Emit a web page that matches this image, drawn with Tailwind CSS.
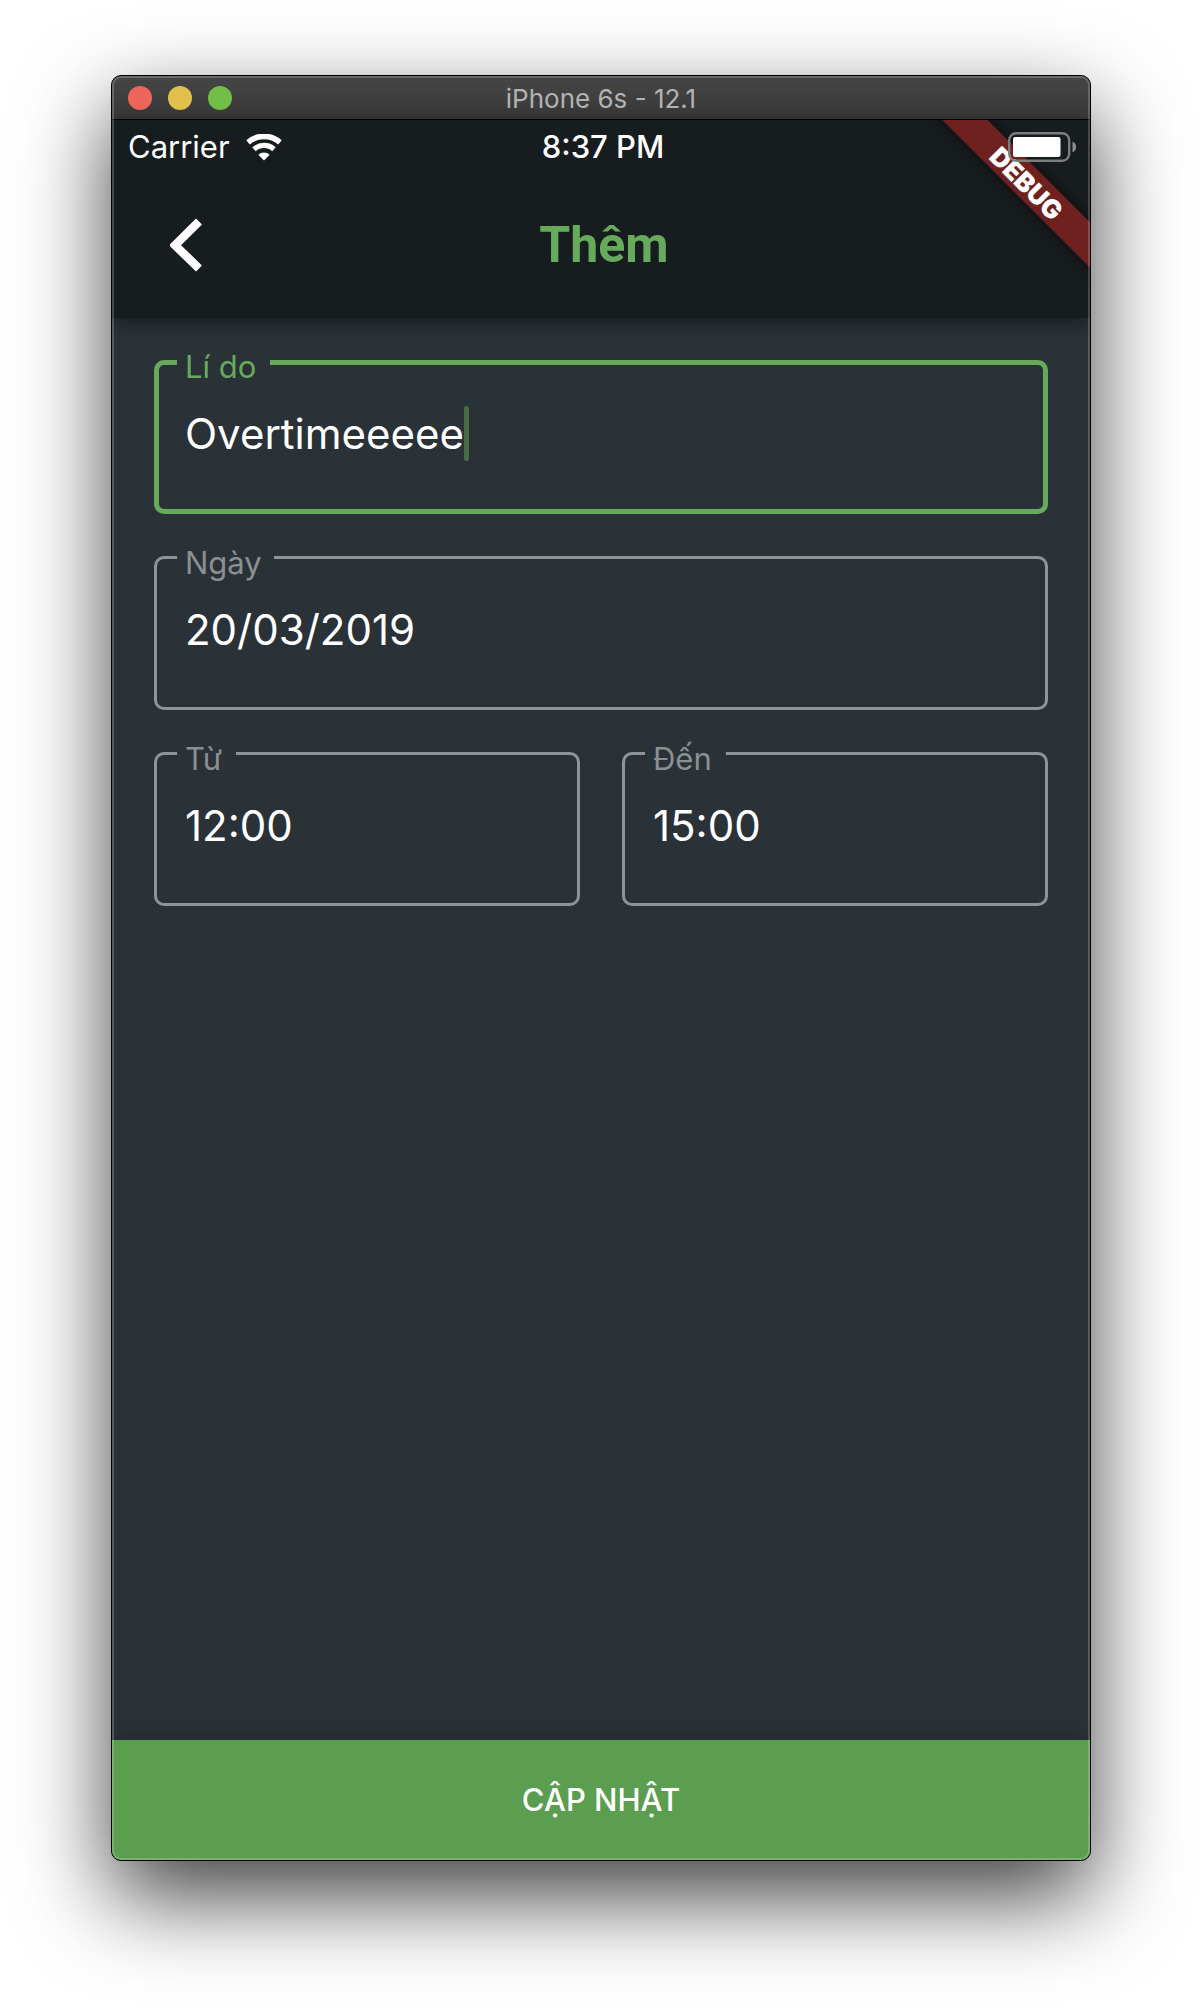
<!DOCTYPE html>
<html lang="vi">
<head>
<meta charset="utf-8">
<meta name="viewport" content="width=device-width, initial-scale=1">
<title>Thêm</title>
<script src="https://cdn.jsdelivr.net/npm/@tailwindcss/browser@4"></script>
</head>
<body class="bg-white font-['Inter','Noto_Sans',sans-serif]">
<div class="flex min-h-screen flex-col px-[111px] pt-[75px] pb-[147px]">
  <div class="relative flex grow flex-col overflow-hidden rounded-[10px] border border-black bg-[#2a3137] shadow-[0_36px_90px_rgba(0,0,0,0.75)]">

    <!-- Window title bar -->
    <div class="grid h-11 grid-cols-[1fr_auto_1fr] items-center border-b border-black bg-linear-to-b from-[#464646] to-[#383838] px-4">
      <div class="flex gap-4">
        <button type="button" aria-label="Close" class="size-6 rounded-full bg-[#ee655b]"></button>
        <button type="button" aria-label="Minimise" class="size-6 rounded-full bg-[#e1c04c]"></button>
        <button type="button" aria-label="Zoom" class="size-6 rounded-full bg-[#72be47]"></button>
      </div>
      <p class="pt-0.5 text-[26px] leading-8 text-[#b3b3b3]">iPhone 6s - 12.1</p>
    </div>

    <header class="relative h-[198px] bg-[#171c1e] shadow-[0_4px_16px_rgba(0,0,0,0.4)]">
      <!-- Debug ribbon across the corner -->
      <div class="absolute top-0 right-0 size-[180px] overflow-hidden">
        <div class="absolute top-[45px] -right-[66px] flex h-8 w-[260px] rotate-45 items-center justify-center bg-[#6f211f] pt-1 pl-1 text-[26px] leading-8 font-black text-white shadow-[0_0_16px_rgba(0,0,0,0.5)]">DEBUG</div>
      </div>
      <!-- Status bar -->
      <div class="relative grid h-[54px] grid-cols-[1fr_auto_1fr] items-center pr-3 pl-4 text-[31px] leading-9 text-white">
        <div class="flex items-center gap-4">
          <span>Carrier</span>
          <svg class="h-[27px] w-9" viewBox="0 0 36 27" fill="none" aria-label="Wi-Fi">
            <path d="M2 8.300A24.500 24.500 0 0 1 34 8.300" stroke="#fff" stroke-width="5.600"/>
            <path d="M8 15.200A15 15 0 0 1 28 15.200" stroke="#fff" stroke-width="5.200"/>
            <path d="M18 26.500 12.300 20.700A8.500 8.500 0 0 1 23.700 20.700Z" fill="#fff"/>
          </svg>
        </div>
        <span class="font-medium">8:37 PM</span>
        <svg class="h-[30px] w-[70px] justify-self-end" viewBox="0 0 70 30" fill="none" aria-label="Battery">
          <rect x="1.200" y="1.200" width="60" height="27.600" rx="7" stroke="#7b7d7e" stroke-width="2.400"/>
          <rect x="5" y="5" width="47.500" height="20" rx="2" fill="#fff"/>
          <path d="M64.500 9.500A6 6 0 0 1 64.500 20.500Z" fill="#8b8d8e"/>
        </svg>
      </div>
      <!-- App bar -->
      <div class="relative grid h-[144px] grid-cols-[1fr_auto_1fr] items-center pr-9 pb-0.5 pl-[42px]">
        <button type="button" aria-label="Back" class="flex h-16 w-16 items-center justify-center">
          <svg class="h-[54px] w-8" viewBox="0 0 32 54" fill="none"><path d="M29 3.500 5 27.200 29 50.500" stroke="#fff" stroke-width="8.500"/></svg>
        </button>
        <h1 class="font-['Roboto','Noto_Sans',sans-serif] text-[50px] leading-16 font-bold text-[#66ab5b]">Thêm</h1>
      </div>
    </header>

    <form class="flex grow flex-col">
      <div class="grid grow grid-cols-2 content-start gap-[42px] p-[42px]">
        <div class="relative col-span-2 flex h-[154px] rounded-[10px] border-[5px] border-[#66ab5b] px-[26px] pt-[41px]">
          <label for="reason" class="absolute -top-[18px] left-[18px] bg-[#2a3137] pr-3.5 pl-2 text-[31px] leading-10 text-[#66ab5b]">Lí do</label>
          <input id="reason" type="text" value="Overtimeeeee" class="field-sizing-content h-[56px] text-[42px] leading-[56px] text-white outline-none">
          <span class="h-[55px] w-[5px] rounded-full bg-[#476c48]"></span>
        </div>
        <div class="relative col-span-2 flex h-[154px] rounded-[10px] border-[3px] border-[#8e9497] px-7 pt-[43px]">
          <label for="date" class="absolute -top-4 left-5 bg-[#2a3137] pr-3 pl-2 text-[31px] leading-10 text-[#8a8f92]">Ngày</label>
          <input id="date" type="text" value="20/03/2019" class="h-[56px] w-full text-[42px] leading-[56px] text-white outline-none">
        </div>
        <div class="relative flex h-[154px] rounded-[10px] border-[3px] border-[#8e9497] px-7 pt-[43px]">
          <label for="from" class="absolute -top-4 left-5 bg-[#2a3137] pr-3.5 pl-2 text-[31px] leading-10 text-[#8a8f92]">Từ</label>
          <input id="from" type="text" value="12:00" class="h-[56px] w-full text-[42px] leading-[56px] text-white outline-none">
        </div>
        <div class="relative flex h-[154px] rounded-[10px] border-[3px] border-[#8e9497] px-7 pt-[43px]">
          <label for="to" class="absolute -top-4 left-5 bg-[#2a3137] pr-3.5 pl-2 text-[31px] leading-10 text-[#8a8f92]">Đến</label>
          <input id="to" type="text" value="15:00" class="h-[56px] w-full text-[42px] leading-[56px] text-white outline-none">
        </div>
      </div>
      <button type="submit" class="h-[120px] bg-[#5c9e50] text-[31px] leading-10 font-medium text-white shadow-[0_0_24px_rgba(0,0,0,0.2)]">CẬP NHẬT</button>
    </form>

    <!-- Light rim along the window edge -->
    <div class="pointer-events-none absolute inset-0 rounded-[9px] border-2 border-white/20"></div>
  </div>
</div>
</body>
</html>
